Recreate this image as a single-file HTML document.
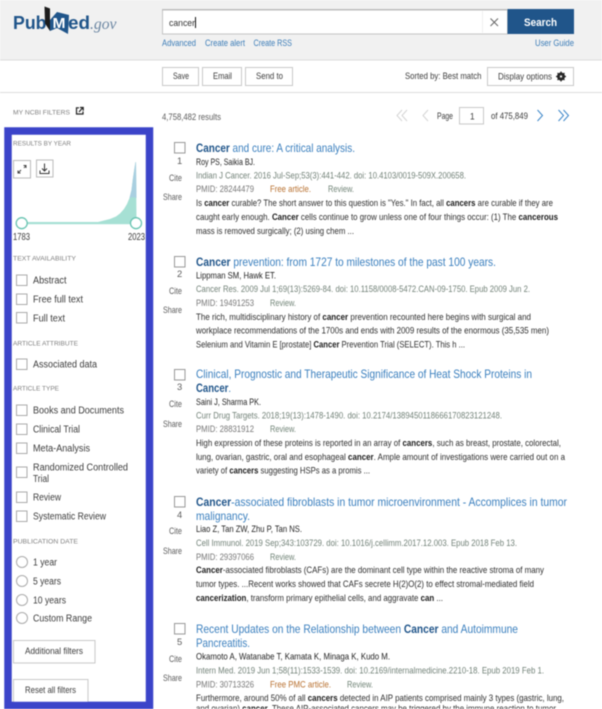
<!DOCTYPE html>
<html><head><meta charset="utf-8"><style>
html,body{margin:0;padding:0;background:#fff;width:602px;height:709px;overflow:hidden}
svg{display:block;filter:blur(.4px)}
text{font-family:"Liberation Sans",sans-serif;font-size:9.3px;fill:#2e2e2e;white-space:pre}
.t{font-size:11.6px;fill:#3a7fbe}.t .b{font-weight:bold;fill:#20558a}
.b{font-weight:bold;fill:#1c1c1c}
.a{fill:#1f1f1f}.j{fill:#728278}.p{fill:#777}.f{fill:#b8702f}.r{fill:#728578}
.s{fill:#5c5c5c;font-size:9.4px}
.h{font-size:6.8px;fill:#808080}
.l{font-size:9.8px;fill:#3c3c3c}
.k{font-size:9px;fill:#3c7db8}
.btn{fill:#fff;stroke:#c9c9c9;stroke-width:1}
.c{fill:#fff;stroke:#aaa;stroke-width:1}
.c2{fill:#fff;stroke:#999;stroke-width:1}
.o{fill:#fff;stroke:#aaa;stroke-width:1}
.bt{font-size:9.3px;fill:#3c3c3c}
</style></head><body>
<svg width="602" height="709" viewBox="0 0 602 709" xmlns="http://www.w3.org/2000/svg">
<rect width="602" height="709" fill="#fff"/>
<rect width="602" height="60" fill="#f1f1f1"/>
<rect y="59.5" width="602" height="1" fill="#dcdcdc"/>
<rect y="92" width="602" height="1" fill="#dcdcdc"/>

<!-- logo -->
<text x="13" y="29" textLength="33.500" lengthAdjust="spacingAndGlyphs" style="font-size:18.500px;font-weight:bold;fill:#20558a">Pub</text>
<path d="M44.500 6.500 50 8.500 50 31 45 23.500Z" fill="#1c1c1c"/>
<path d="M50 20 57 12 69 15 68 34 57 28 50 31Z" fill="#20558a"/>
<text x="52.500" y="28" textLength="13" lengthAdjust="spacingAndGlyphs" style="font-size:14.500px;font-weight:bold;fill:#fff">M</text>
<text x="68" y="29" textLength="22" lengthAdjust="spacingAndGlyphs" style="font-size:18.500px;font-weight:bold;fill:#20558a">ed</text>
<text x="90" y="29" textLength="26.500" lengthAdjust="spacingAndGlyphs" style="font-family:'Liberation Serif',serif;font-style:italic;font-size:16px;fill:#6c87a3">.gov</text>

<!-- search -->
<rect x="162.500" y="9.500" width="345" height="24.500" fill="#fff" stroke="#c4c4c4"/>
<rect x="162" y="9" width="345" height="1.500" fill="#bdbdbd"/>
<rect x="482" y="11" width="1" height="22" fill="#f0f0f0"/>
<path d="M490.500 18.500 498 26M498 18.500 490.500 26" stroke="#666" stroke-width="1" fill="none"/>
<rect x="507.500" y="9" width="66.500" height="25" fill="#20558a"/>
<text x="524" y="26" textLength="33" lengthAdjust="spacingAndGlyphs" style="font-size:11px;font-weight:bold;fill:#fff">Search</text>
<text x="169" y="26" textLength="26" lengthAdjust="spacingAndGlyphs" style="font-size:9.600px;fill:#333">cancer</text>
<rect x="195" y="17" width="1" height="11" fill="#111"/>
<text class="k" x="162" y="46" textLength="34" lengthAdjust="spacingAndGlyphs">Advanced</text>
<text class="k" x="205" y="46" textLength="40" lengthAdjust="spacingAndGlyphs">Create alert</text>
<text class="k" x="253.500" y="46" textLength="38.500" lengthAdjust="spacingAndGlyphs">Create RSS</text>
<text class="k" x="535" y="46" textLength="39" lengthAdjust="spacingAndGlyphs">User Guide</text>

<!-- toolbar -->
<rect class="btn" x="162.500" y="67.500" width="36" height="18"/>
<text class="bt" x="173" y="79" textLength="16" lengthAdjust="spacingAndGlyphs">Save</text>
<rect class="btn" x="202.500" y="67.500" width="39" height="18"/>
<text class="bt" x="213" y="79" textLength="19" lengthAdjust="spacingAndGlyphs">Email</text>
<rect class="btn" x="245.500" y="67.500" width="47" height="18"/>
<text class="bt" x="256" y="79" textLength="27" lengthAdjust="spacingAndGlyphs">Send to</text>
<text class="bt" x="405" y="79" textLength="76.500" lengthAdjust="spacingAndGlyphs">Sorted by: Best match</text>
<rect class="btn" x="487.500" y="67.500" width="86" height="18"/>
<text class="bt" x="498" y="79.500" textLength="54" lengthAdjust="spacingAndGlyphs">Display options</text>
<circle cx="561" cy="76.500" r="3" fill="none" stroke="#222" stroke-width="2"/>
<path d="M561 71.500v10M556 76.500h10M557.500 73l7 7M564.500 73l-7 7" stroke="#222" stroke-width="1.200"/>
<circle cx="561" cy="76.500" r="1.100" fill="#fff"/>

<!-- my ncbi -->
<text class="h" x="13" y="114.300" textLength="57" lengthAdjust="spacingAndGlyphs">MY NCBI FILTERS</text>
<path d="M79 107.800H76.500V114H83V111.500" fill="none" stroke="#222" stroke-width="1.200"/>
<path d="M79 112 82.500 108M80 107.500H83.200V110.700" fill="none" stroke="#222" stroke-width="1.200"/>

<text class="s" x="162" y="120" textLength="59" lengthAdjust="spacingAndGlyphs">4,758,482 results</text>

<!-- pagination -->
<g fill="none" stroke-width="1">
<path d="M402 110 397 115.500 402 121M407 110 402 115.500 407 121" stroke="#d4d4d4"/>
<path d="M428 110 423 115.500 428 121" stroke="#d4d4d4"/>
<path d="M537.500 110 542.500 115.500 537.500 121" stroke="#3c86c8"/>
<path d="M558.500 110 563.500 115.500 558.500 121M563.500 110 568.500 115.500 563.500 121" stroke="#3c86c8"/>
</g>
<text class="bt" x="437" y="119" textLength="16" lengthAdjust="spacingAndGlyphs">Page</text>
<rect class="btn" x="459.500" y="107.500" width="24" height="16.500"/>
<text class="bt" x="470" y="119.500" textLength="4.600" lengthAdjust="spacingAndGlyphs">1</text>
<text class="bt" x="491" y="119" textLength="37" lengthAdjust="spacingAndGlyphs">of 475,849</text>

<!-- blue frame -->
<rect x="8" y="131" width="141.500" height="574.500" fill="#fff" stroke="#3b44c9" stroke-width="7.500"/>

<text class="h" x="13" y="145.300" textLength="58" lengthAdjust="spacingAndGlyphs">RESULTS BY YEAR</text>
<rect class="btn" x="13.500" y="160.500" width="17" height="17.500" style="stroke:#bbb"/>
<rect class="btn" x="36.500" y="160" width="16.500" height="17" style="stroke:#bbb"/>
<path d="M18.500 172.500 21 170M18 170.500V173H20.500M24 168 26 165.500M23.500 165.500H26V168" fill="none" stroke="#444" stroke-width="1"/>
<path d="M44.500 163.500V170.500M42 168.500 44.500 171 47 168.500M40 170.500V173.500H49V170.500" fill="none" stroke="#333" stroke-width="1"/>

<path d="M98 222 104 220.500 110 219 116 216.500 120 213.500 124 209 127 204 129.500 198 131.500 190 133 178 134.500 168 135.500 162 136 162 136.500 222Z" fill="#a6e0d4"/>
<path d="M129.500 198 131.500 190 133 178 134.500 168 135.500 162 136 162 136.500 198 133 197Z" fill="#a9cfe0"/>
<rect x="21" y="222" width="115" height="2.200" fill="#a6e0d4"/>
<circle cx="21.700" cy="223.200" r="5.500" fill="#fff" stroke="#69c4b2" stroke-width="1.300"/>
<circle cx="136" cy="223.200" r="5.500" fill="#fff" stroke="#69c4b2" stroke-width="1.300"/>
<text class="l" x="13" y="240" textLength="17" lengthAdjust="spacingAndGlyphs">1783</text>
<text class="l" x="128" y="240" textLength="17" lengthAdjust="spacingAndGlyphs">2023</text>

<text class="h" x="13" y="260.300" textLength="63" lengthAdjust="spacingAndGlyphs">TEXT AVAILABILITY</text>
<rect class="c" x="16.500" y="275" width="10.500" height="10.500"/><text class="l" x="33" y="283.300" textLength="33.500" lengthAdjust="spacingAndGlyphs">Abstract</text>
<rect class="c" x="16.500" y="294" width="10.500" height="10.500"/><text class="l" x="33" y="302.300" textLength="50" lengthAdjust="spacingAndGlyphs">Free full text</text>
<rect class="c" x="16.500" y="312.500" width="10.500" height="10.500"/><text class="l" x="33" y="321.300" textLength="32" lengthAdjust="spacingAndGlyphs">Full text</text>

<text class="h" x="13" y="345.300" textLength="65" lengthAdjust="spacingAndGlyphs">ARTICLE ATTRIBUTE</text>
<rect class="c" x="16.500" y="359" width="10.500" height="10.500"/><text class="l" x="33" y="367.300" textLength="64" lengthAdjust="spacingAndGlyphs">Associated data</text>

<text class="h" x="13" y="390.300" textLength="46" lengthAdjust="spacingAndGlyphs">ARTICLE TYPE</text>
<rect class="c" x="16.500" y="405" width="10.500" height="10.500"/><text class="l" x="33" y="413.300" textLength="91" lengthAdjust="spacingAndGlyphs">Books and Documents</text>
<rect class="c" x="16.500" y="424" width="10.500" height="10.500"/><text class="l" x="33" y="432.300" textLength="47" lengthAdjust="spacingAndGlyphs">Clinical Trial</text>
<rect class="c" x="16.500" y="443" width="10.500" height="10.500"/><text class="l" x="33" y="451.300" textLength="57" lengthAdjust="spacingAndGlyphs">Meta-Analysis</text>
<rect class="c" x="16.500" y="467" width="10.500" height="10.500"/><text class="l" x="33" y="470.300" textLength="95" lengthAdjust="spacingAndGlyphs">Randomized Controlled</text><text class="l" x="33" y="482" textLength="16" lengthAdjust="spacingAndGlyphs">Trial</text>
<rect class="c" x="16.500" y="492" width="10.500" height="10.500"/><text class="l" x="33" y="500.300" textLength="28" lengthAdjust="spacingAndGlyphs">Review</text>
<rect class="c" x="16.500" y="511" width="10.500" height="10.500"/><text class="l" x="33" y="519.300" textLength="73" lengthAdjust="spacingAndGlyphs">Systematic Review</text>

<text class="h" x="13" y="543.300" textLength="65" lengthAdjust="spacingAndGlyphs">PUBLICATION DATE</text>
<circle class="o" cx="22" cy="562" r="5.500"/><text class="l" x="33" y="565.300" textLength="24" lengthAdjust="spacingAndGlyphs">1 year</text>
<circle class="o" cx="22" cy="581" r="5.500"/><text class="l" x="33" y="584.300" textLength="28" lengthAdjust="spacingAndGlyphs">5 years</text>
<circle class="o" cx="22" cy="600" r="5.500"/><text class="l" x="33" y="603.300" textLength="33" lengthAdjust="spacingAndGlyphs">10 years</text>
<circle class="o" cx="22" cy="618" r="5.500"/><text class="l" x="33" y="621.300" textLength="59" lengthAdjust="spacingAndGlyphs">Custom Range</text>
<rect class="btn" x="13.500" y="640.500" width="81.500" height="22.500"/>
<text class="bt" x="25" y="654" textLength="58" lengthAdjust="spacingAndGlyphs">Additional filters</text>
<rect class="btn" x="13.500" y="679.500" width="74.500" height="24"/>
<rect x="12" y="701.750" width="134" height="3.500" fill="#3b44c9"/>
<text class="bt" x="25" y="693" textLength="51" lengthAdjust="spacingAndGlyphs">Reset all filters</text>

<!-- Result 1 -->
<rect class="c2" x="174.500" y="142.500" width="10.500" height="10.500"/>
<text class="s" x="177" y="164">1</text><text class="s" x="169" y="181" textLength="13" lengthAdjust="spacingAndGlyphs">Cite</text><text class="s" x="163" y="200" textLength="19" lengthAdjust="spacingAndGlyphs">Share</text>
<text class="t" x="196" y="152" textLength="159" lengthAdjust="spacingAndGlyphs"><tspan class="b">Cancer</tspan> and cure: A critical analysis.</text>
<text class="a" x="196" y="165" textLength="59" lengthAdjust="spacingAndGlyphs">Roy PS, Saikia BJ.</text>
<text class="j" x="196" y="178.500" textLength="270" lengthAdjust="spacingAndGlyphs">Indian J Cancer. 2016 Jul-Sep;53(3):441-442. doi: 10.4103/0019-509X.200658.</text>
<text class="p" x="196" y="192" textLength="58" lengthAdjust="spacingAndGlyphs">PMID: 28244479</text>
<text class="f" x="270" y="192" textLength="41" lengthAdjust="spacingAndGlyphs">Free article.</text>
<text class="r" x="328" y="192" textLength="26" lengthAdjust="spacingAndGlyphs">Review.</text>
<text x="196" y="206" textLength="357" lengthAdjust="spacingAndGlyphs">Is <tspan class="b">cancer</tspan> curable? The short answer to this question is "Yes." In fact, all <tspan class="b">cancers</tspan> are curable if they are</text>
<text x="196" y="220" textLength="362" lengthAdjust="spacingAndGlyphs">caught early enough. <tspan class="b">Cancer</tspan> cells continue to grow unless one of four things occur: (1) The <tspan class="b">cancerous</tspan></text>
<text x="196" y="234" textLength="158" lengthAdjust="spacingAndGlyphs">mass is removed surgically; (2) using chem ...</text>

<!-- Result 2 -->
<rect class="c2" x="174.500" y="256.500" width="10.500" height="10.500"/>
<text class="s" x="177" y="277">2</text><text class="s" x="169" y="294" textLength="13" lengthAdjust="spacingAndGlyphs">Cite</text><text class="s" x="163" y="313" textLength="19" lengthAdjust="spacingAndGlyphs">Share</text>
<text class="t" x="196" y="266" textLength="300" lengthAdjust="spacingAndGlyphs"><tspan class="b">Cancer</tspan> prevention: from 1727 to milestones of the past 100 years.</text>
<text class="a" x="196" y="278.500" textLength="80" lengthAdjust="spacingAndGlyphs">Lippman SM, Hawk ET.</text>
<text class="j" x="196" y="292" textLength="334" lengthAdjust="spacingAndGlyphs">Cancer Res. 2009 Jul 1;69(13):5269-84. doi: 10.1158/0008-5472.CAN-09-1750. Epub 2009 Jun 2.</text>
<text class="p" x="196" y="306" textLength="58" lengthAdjust="spacingAndGlyphs">PMID: 19491253</text>
<text class="r" x="270" y="306" textLength="26" lengthAdjust="spacingAndGlyphs">Review.</text>
<text x="196" y="320" textLength="335" lengthAdjust="spacingAndGlyphs">The rich, multidisciplinary history of <tspan class="b">cancer</tspan> prevention recounted here begins with surgical and</text>
<text x="196" y="333.500" textLength="353" lengthAdjust="spacingAndGlyphs">workplace recommendations of the 1700s and ends with 2009 results of the enormous (35,535 men)</text>
<text x="196" y="347.500" textLength="269" lengthAdjust="spacingAndGlyphs">Selenium and Vitamin E [prostate] <tspan class="b">Cancer</tspan> Prevention Trial (SELECT). This h ...</text>

<!-- Result 3 -->
<rect class="c2" x="174.500" y="369.500" width="10.500" height="10.500"/>
<text class="s" x="177" y="390">3</text><text class="s" x="169" y="407" textLength="13" lengthAdjust="spacingAndGlyphs">Cite</text><text class="s" x="163" y="427" textLength="19" lengthAdjust="spacingAndGlyphs">Share</text>
<text class="t" x="196" y="378" textLength="336" lengthAdjust="spacingAndGlyphs">Clinical, Prognostic and Therapeutic Significance of Heat Shock Proteins in</text>
<text class="t" x="196" y="392" textLength="35" lengthAdjust="spacingAndGlyphs"><tspan class="b">Cancer</tspan>.</text>
<text class="a" x="196" y="405" textLength="65" lengthAdjust="spacingAndGlyphs">Saini J, Sharma PK.</text>
<text class="j" x="196" y="418.700" textLength="306" lengthAdjust="spacingAndGlyphs">Curr Drug Targets. 2018;19(13):1478-1490. doi: 10.2174/1389450118666170823121248.</text>
<text class="p" x="196" y="432" textLength="58" lengthAdjust="spacingAndGlyphs">PMID: 28831912</text>
<text class="r" x="270" y="432" textLength="26" lengthAdjust="spacingAndGlyphs">Review.</text>
<text x="196" y="446" textLength="365" lengthAdjust="spacingAndGlyphs">High expression of these proteins is reported in an array of <tspan class="b">cancers</tspan>, such as breast, prostate, colorectal,</text>
<text x="196" y="460" textLength="369" lengthAdjust="spacingAndGlyphs">lung, ovarian, gastric, oral and esophageal <tspan class="b">cancer</tspan>. Ample amount of investigations were carried out on a</text>
<text x="196" y="473.700" textLength="174" lengthAdjust="spacingAndGlyphs">variety of <tspan class="b">cancers</tspan> suggesting HSPs as a promis ...</text>

<!-- Result 4 -->
<rect class="c2" x="174.500" y="496.500" width="10.500" height="10.500"/>
<text class="s" x="177" y="518">4</text><text class="s" x="169" y="534" textLength="13" lengthAdjust="spacingAndGlyphs">Cite</text><text class="s" x="163" y="554" textLength="19" lengthAdjust="spacingAndGlyphs">Share</text>
<text class="t" x="196" y="506" textLength="371" lengthAdjust="spacingAndGlyphs"><tspan class="b">Cancer</tspan>-associated fibroblasts in tumor microenvironment - Accomplices in tumor</text>
<text class="t" x="196" y="520" textLength="54" lengthAdjust="spacingAndGlyphs">malignancy.</text>
<text class="a" x="196" y="532" textLength="106" lengthAdjust="spacingAndGlyphs">Liao Z, Tan ZW, Zhu P, Tan NS.</text>
<text class="j" x="196" y="546" textLength="321" lengthAdjust="spacingAndGlyphs">Cell Immunol. 2019 Sep;343:103729. doi: 10.1016/j.cellimm.2017.12.003. Epub 2018 Feb 13.</text>
<text class="p" x="196" y="560" textLength="58" lengthAdjust="spacingAndGlyphs">PMID: 29397066</text>
<text class="r" x="270" y="560" textLength="26" lengthAdjust="spacingAndGlyphs">Review.</text>
<text x="196" y="573" textLength="348" lengthAdjust="spacingAndGlyphs"><tspan class="b">Cancer</tspan>-associated fibroblasts (CAFs) are the dominant cell type within the reactive stroma of many</text>
<text x="196" y="587" textLength="338" lengthAdjust="spacingAndGlyphs">tumor types. ...Recent works showed that CAFs secrete H(2)O(2) to effect stromal-mediated field</text>
<text x="196" y="601" textLength="247" lengthAdjust="spacingAndGlyphs"><tspan class="b">cancerization</tspan>, transform primary epithelial cells, and aggravate <tspan class="b">can</tspan> ...</text>

<!-- Result 5 -->
<rect class="c2" x="174.500" y="623.500" width="10.500" height="10.500"/>
<text class="s" x="177" y="645">5</text><text class="s" x="169" y="662" textLength="13" lengthAdjust="spacingAndGlyphs">Cite</text><text class="s" x="163" y="681" textLength="19" lengthAdjust="spacingAndGlyphs">Share</text>
<text class="t" x="196" y="633" textLength="322" lengthAdjust="spacingAndGlyphs">Recent Updates on the Relationship between <tspan class="b">Cancer</tspan> and Autoimmune</text>
<text class="t" x="196" y="647" textLength="54" lengthAdjust="spacingAndGlyphs">Pancreatitis.</text>
<text class="a" x="196" y="659.500" textLength="194" lengthAdjust="spacingAndGlyphs">Okamoto A, Watanabe T, Kamata K, Minaga K, Kudo M.</text>
<text class="j" x="196" y="673.500" textLength="348" lengthAdjust="spacingAndGlyphs">Intern Med. 2019 Jun 1;58(11):1533-1539. doi: 10.2169/internalmedicine.2210-18. Epub 2019 Feb 1.</text>
<text class="p" x="196" y="687.500" textLength="58" lengthAdjust="spacingAndGlyphs">PMID: 30713326</text>
<text class="f" x="270" y="687.500" textLength="61" lengthAdjust="spacingAndGlyphs">Free PMC article.</text>
<text class="r" x="347" y="687.500" textLength="26" lengthAdjust="spacingAndGlyphs">Review.</text>
<text x="196" y="701" textLength="368" lengthAdjust="spacingAndGlyphs">Furthermore, around 50% of all <tspan class="b">cancers</tspan> detected in AIP patients comprised mainly 3 types (gastric, lung,</text>
<text x="196" y="711.500" textLength="360" lengthAdjust="spacingAndGlyphs">and ovarian) <tspan class="b">cancer</tspan>. These AIP-associated cancers may be triggered by the immune reaction to tumor</text>
</svg>
</body></html>
